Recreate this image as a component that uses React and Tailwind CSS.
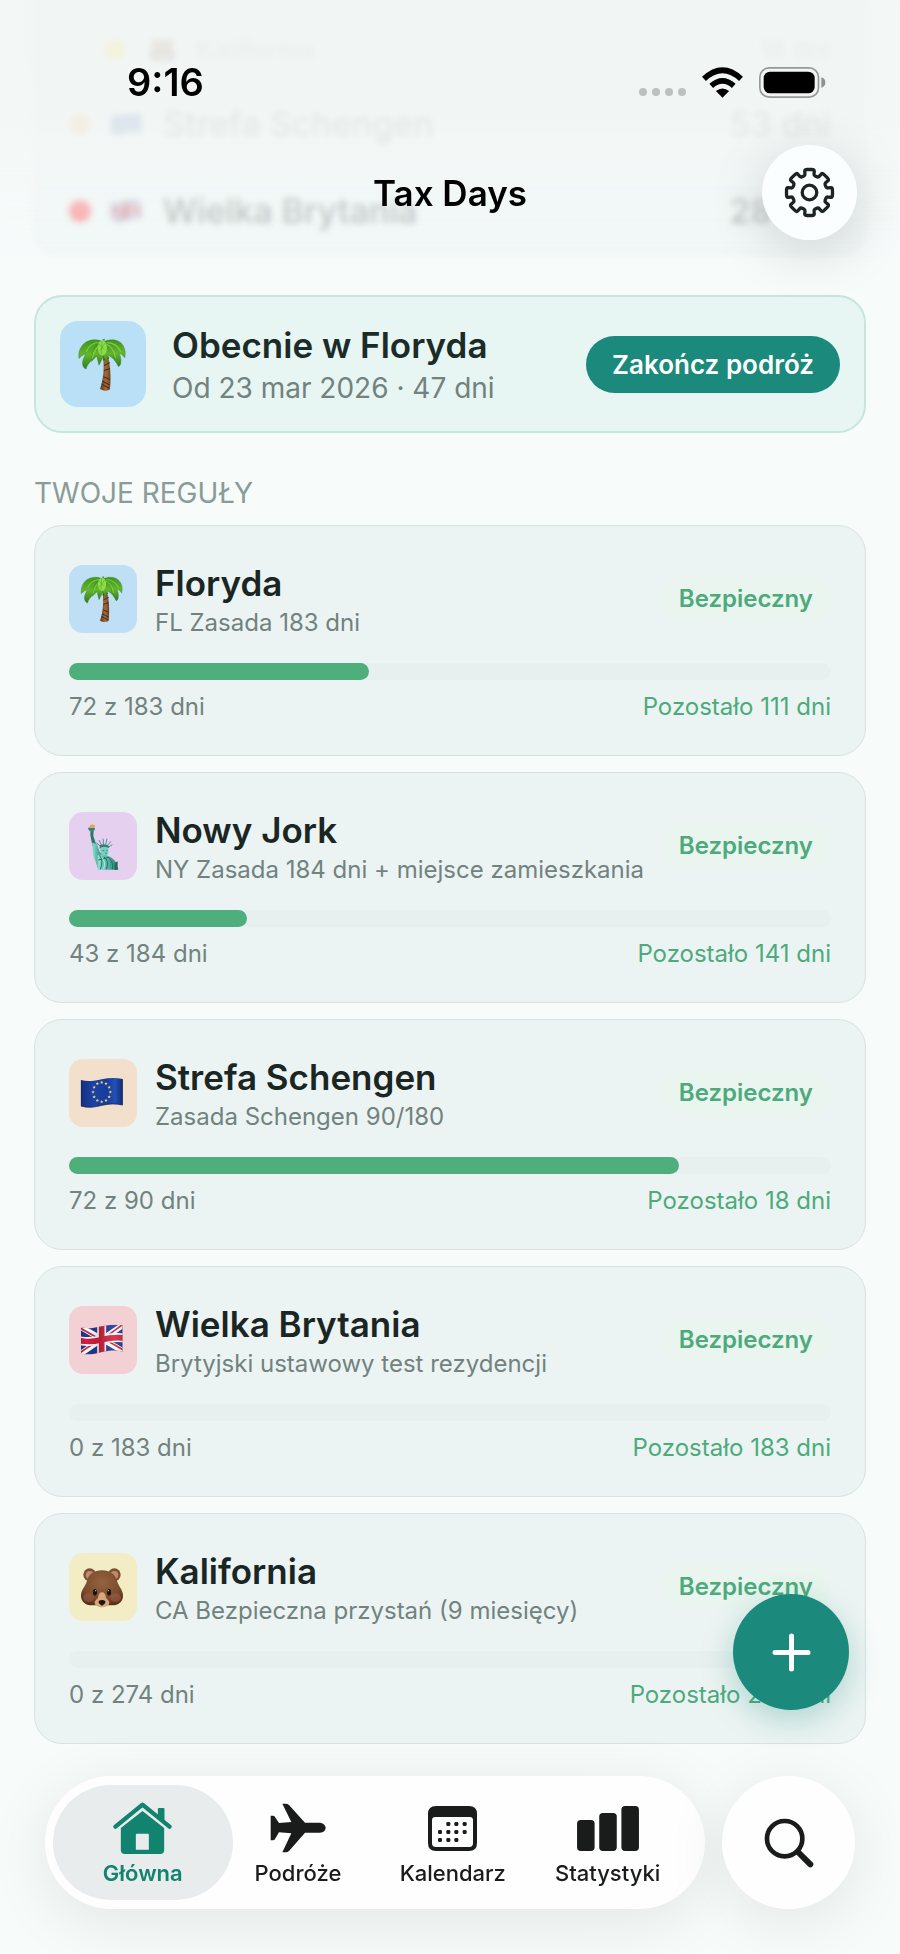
import React from "react";

/* ---------- Region artwork (shared 204 x 204 canvas) ---------- */

function Palm() {
  return (
    <svg viewBox="0 0 204 204" className="size-full" aria-hidden="true">
      <defs>
        <linearGradient id="trunk" x1="0" x2="1">
          <stop offset="0" stopColor="#5b331a" />
          <stop offset=".55" stopColor="#a06c3a" />
          <stop offset="1" stopColor="#6d4322" />
        </linearGradient>
        <linearGradient id="frond" x1="0" y1="0" x2="0" y2="1">
          <stop offset="0" stopColor="#3f9420" />
          <stop offset=".5" stopColor="#64b62c" />
          <stop offset="1" stopColor="#2f7d1c" />
        </linearGradient>
      </defs>
      <path d="M98 72C106 100 103 138 93 167Q105 175 119 168C123 138 120 100 112 72Z" fill="url(#trunk)" />
      <path d="M101 90L117 84M103 105L119 97M103 118L119 113M102 134L119 142M99 146L118 156M97 154L117 165" stroke="#3d210f" strokeWidth="2.5" fill="none" />
      <g fill="url(#frond)" stroke="#2f7d1c" strokeWidth="1">
        <path d="M102 42C84 32 58 36 47 50C38 61 35 72 37 86C44 79 48 76 54 74C52 82 44 92 47 104C49 110 52 113 56 114C58 102 66 98 70 90C74 82 84 76 92 70Z" />
        <path d="M102 42C120 32 145 36 154 52C160 62 161 73 158 84C153 76 148 74 144 72C147 80 150 92 147 102Q144 108 141 107C138 98 132 95 128 84C123 78 116 74 108 70Z" />
        <path d="M88 42L74 66L70 94L84 80L90 104L102 80L108 96L116 78L130 88L126 62L112 42Z" />
      </g>
      <path d="M98 44C80 42 64 50 56 68M98 48C84 54 76 68 72 86M110 44C128 44 140 52 148 68M110 48C124 54 130 66 134 84" stroke="#9adf52" strokeWidth="3" fill="none" opacity=".7" />
      <ellipse cx="99" cy="58" rx="12" ry="20" fill="#8ddc4c" />
      <path d="M98 40L96 74M90 48L104 62M106 46L92 66" stroke="#5bb02c" strokeWidth="2" />
      <path d="M98 36L106 34L104 40Z" fill="#3f9420" />
    </svg>
  );
}

function Liberty() {
  return (
    <svg viewBox="0 0 204 204" className="size-full" aria-hidden="true">
      <defs>
        <linearGradient id="copper" x1="0" x2="1">
          <stop offset="0" stopColor="#8fe0d2" />
          <stop offset=".5" stopColor="#55b5a6" />
          <stop offset="1" stopColor="#2d8176" />
        </linearGradient>
      </defs>
      <path d="M62 46C60 38 68 40 70 37C74 40 80 36 77 46Z" fill="#f0a52e" />
      <path d="M57 47H78L76 56H60Z" fill="#2c7f73" />
      <path d="M64 56H74L73 72L80 92L86 112L76 122L68 90L64 70Z" fill="#2d766d" />
      <path d="M70 92L84 96L92 120L100 128L88 174L80 150L72 128Z" fill="url(#copper)" />
      <path d="M82 92L96 104M90 84L98 100M102 80L104 98M114 80L110 98M126 88L114 102M130 98L118 106" stroke="#3b7c82" strokeWidth="2.5" />
      <path d="M92 100Q106 92 120 102L119 109Q106 102 92 110Z" fill="#347f77" />
      <path d="M94 108Q106 102 118 109V122Q116 132 108 133Q97 130 94 120Z" fill="#79cfc0" />
      <path d="M100 116H106M111 116H116M108 124H114" stroke="#276e65" strokeWidth="2" />
      <path d="M86 130Q102 124 118 132Q140 142 144 160V173H86Z" fill="url(#copper)" />
      <path d="M92 130Q104 146 94 172M104 134Q122 146 112 172M118 136Q134 150 130 172M88 144L120 136" stroke="#276e65" strokeWidth="3" fill="none" />
      <path d="M98 136Q112 150 104 172" stroke="#a4ece0" strokeWidth="3" fill="none" />
      <path d="M138 152L146 148V164L148 173H136Z" fill="#22685f" />
    </svg>
  );
}

const STARS = Array.from({ length: 12 }, (_, i) => {
  const a = (i * Math.PI) / 6;
  return [98 + 26 * Math.sin(a), 99 - 29 * Math.cos(a)];
});

function EuFlag() {
  return (
    <svg viewBox="0 0 204 204" className="size-full" aria-hidden="true">
      <defs>
        <linearGradient id="eu" x1="0" x2="1">
          <stop offset="0" stopColor="#14307f" />
          <stop offset=".3" stopColor="#1b43a6" />
          <stop offset=".62" stopColor="#173c9c" />
          <stop offset=".82" stopColor="#2450b4" />
          <stop offset="1" stopColor="#122a72" />
        </linearGradient>
      </defs>
      <path d="M36 63C56 69 76 66 98 61C120 56 142 56 161 60V138C142 133 120 134 98 139C76 145 56 147 36 141Z" fill="url(#eu)" />
      <path d="M36 141C56 147 76 145 98 139C120 134 142 133 161 138" stroke="#0e215c" strokeWidth="2.5" fill="none" />
      <path d="M37 64V141M160 61V137" stroke="#0e215c" strokeWidth="2" />
      {STARS.map(([x, y], i) => (
        <path key={i} transform={`translate(${x} ${y})`} d="M0-5L1.4-1.6L5-1.4L2.2.9L3.1 4.4L0 2.4L-3.1 4.4L-2.2.9L-5-1.4L-1.4-1.6Z" fill="#f5d57a" />
      ))}
    </svg>
  );
}

function UkFlag() {
  return (
    <svg viewBox="0 0 204 204" className="size-full" aria-hidden="true">
      <defs>
        <clipPath id="ukwave">
          <path d="M36 63C56 69 76 67 98 61C120 56 142 55 161 58V137C142 131 120 133 98 138C76 145 56 147 36 143Z" />
        </clipPath>
        <linearGradient id="sheen" x1="0" x2="1">
          <stop offset="0" stopColor="#000" stopOpacity=".22" />
          <stop offset=".15" stopColor="#000" stopOpacity="0" />
          <stop offset=".45" stopColor="#000" stopOpacity=".14" />
          <stop offset=".75" stopColor="#fff" stopOpacity=".1" />
          <stop offset="1" stopColor="#000" stopOpacity=".2" />
        </linearGradient>
      </defs>
      <g clipPath="url(#ukwave)">
        <path d="M30 50H170V150H30Z" fill="#1f3a93" />
        <path d="M30 60L167 138M30 146L167 54" stroke="#fff" strokeWidth="17" />
        <path d="M30 64L98 103M102 97L167 134M30 142L98 96M102 99L167 51" stroke="#cf2340" strokeWidth="5" />
        <path d="M98 50V150M30 104Q64 110 98 101T167 96" stroke="#fff" strokeWidth="27" fill="none" />
        <path d="M98 50V150M30 104Q64 110 98 101T167 96" stroke="#d3213f" strokeWidth="17" fill="none" />
        <path d="M30 50H170V150H30Z" fill="url(#sheen)" />
      </g>
    </svg>
  );
}

function Bear() {
  return (
    <svg viewBox="0 0 204 204" className="size-full" aria-hidden="true">
      <defs>
        <radialGradient id="fur" cx=".5" cy=".35" r=".65">
          <stop offset="0" stopColor="#94633f" />
          <stop offset=".7" stopColor="#7c4c2d" />
          <stop offset="1" stopColor="#5b331c" />
        </radialGradient>
      </defs>
      <circle cx="62" cy="65" r="19" fill="#7d4e2f" />
      <circle cx="136" cy="65" r="19" fill="#7d4e2f" />
      <circle cx="62" cy="66" r="12" fill="#bb8b70" />
      <circle cx="136" cy="66" r="12" fill="#bb8b70" />
      <path d="M99 52C123 52 140 64 145 86C149 100 162 110 162 128C162 146 148 157 130 157H68C50 157 36 146 36 128C36 110 49 100 53 86C58 64 75 52 99 52Z" fill="url(#fur)" />
      <ellipse cx="58" cy="134" rx="16" ry="13" fill="#a15f49" opacity=".55" />
      <ellipse cx="140" cy="134" rx="16" ry="13" fill="#a15f49" opacity=".55" />
      <path d="M99 118C106 118 110 124 111 135C116 140 121 144 121 150C119 159 110 162 99 163C88 162 79 159 77 150C77 144 82 140 87 135C88 124 92 118 99 118Z" fill="#d6a877" />
      <path d="M89 144Q99 138 109 144Q111 152 99 158Q87 152 89 144Z" fill="#1c1512" />
      <ellipse cx="78" cy="118" rx="6" ry="10" fill="#1a1210" />
      <ellipse cx="120" cy="118" rx="6" ry="10" fill="#1a1210" />
      <circle cx="80" cy="113" r="2" fill="#d9c9bd" />
      <circle cx="118" cy="113" r="2" fill="#d9c9bd" />
    </svg>
  );
}

/* ---------- Interface icons ---------- */

function gearPath() {
  const pts = [];
  for (let k = 0; k < 8; k++) {
    for (const [deg, r] of [[-12, 71], [12, 71], [14.5, 53], [30.5, 53]]) {
      const a = ((k * 45 + deg) * Math.PI) / 180;
      pts.push([80 + r * Math.sin(a), 80 - r * Math.cos(a)]);
    }
  }
  const mix = (p, q, t) => [p[0] + (q[0] - p[0]) * t, p[1] + (q[1] - p[1]) * t];
  const f = (p) => `${p[0].toFixed(1)} ${p[1].toFixed(1)}`;
  return (
    pts
      .map((p, i) => {
        const prev = pts[(i + pts.length - 1) % pts.length];
        const next = pts[(i + 1) % pts.length];
        return `${i ? "L" : "M"}${f(mix(p, prev, 0.26))}Q${f(p)} ${f(mix(p, next, 0.26))}`;
      })
      .join("") + "Z"
  );
}

const GEAR = gearPath();

function GearIcon() {
  return (
    <svg viewBox="0 0 160 160" className="size-[53px]" fill="none" stroke="#1c2423" strokeWidth="10" strokeLinejoin="round" aria-hidden="true">
      <path d={GEAR} />
      <circle cx="80" cy="80" r="22" />
    </svg>
  );
}

function HouseIcon() {
  return (
    <svg viewBox="0 0 176 156" className="h-[52px] w-[59px]" fill="currentColor" aria-hidden="true">
      <path d="M7 74L88 8L169 74" fill="none" stroke="currentColor" strokeWidth="13" strokeLinecap="round" strokeLinejoin="round" />
      <path d="M134 21Q134 18 137 18H151Q154 18 154 21V56L134 40Z" />
      <path fillRule="evenodd" d="M23 78L88 27L153 78V144Q153 156 141 156H35Q23 156 23 144ZM71 95Q68 95 68 98V143H107V98Q107 95 104 95Z" />
    </svg>
  );
}

function PlaneIcon() {
  return (
    <svg viewBox="0 0 168 150" className="h-[50px] w-[56px]" fill="currentColor" aria-hidden="true">
      <path d="M2 38H9Q13 38 15 42L27 60L64 57L37 2H47Q53 2 57 6L105 59H150C161 60 167 68 167 74C167 82 161 88 150 89H105L57 144Q53 148 48 148H37L64 91L27 88L15 108Q13 112 9 112H2Z" />
    </svg>
  );
}

const DOTS = [[61, 54], [85, 54], [110, 54], [36, 78], [61, 78], [85, 78], [110, 78], [36, 102], [61, 102], [85, 102]];

function CalendarIcon() {
  return (
    <svg viewBox="0 0 147 135" className="h-[45px] w-[49px]" fill="currentColor" aria-hidden="true">
      <path fillRule="evenodd" d="M24 0H123Q147 0 147 24V111Q147 135 123 135H24Q0 135 0 111V24Q0 0 24 0ZM22 33Q12 33 12 43V112Q12 123 23 123H124Q135 123 135 112V43Q135 33 125 33Z" />
      {DOTS.map(([x, y]) => (
        <rect key={`${x}-${y}`} x={x - 6} y={y - 6} width="12" height="12" rx="4" />
      ))}
    </svg>
  );
}

function BarsIcon() {
  return (
    <svg viewBox="0 0 187 136" className="h-[45px] w-[62px]" fill="currentColor" aria-hidden="true">
      <rect x="0" y="42" width="53" height="94" rx="11" />
      <rect x="67" y="21" width="53" height="115" rx="11" />
      <rect x="134" y="0" width="53" height="136" rx="11" />
    </svg>
  );
}

function SearchIcon() {
  return (
    <svg viewBox="0 0 150 150" className="size-[50px]" fill="none" stroke="#191c1b" strokeLinecap="round" aria-hidden="true">
      <circle cx="62" cy="62" r="53" strokeWidth="14" />
      <path d="M102 102L139 139" strokeWidth="18" />
    </svg>
  );
}

function WifiIcon() {
  return (
    <svg viewBox="0 0 124 92" className="h-[31px] w-[41px]" aria-hidden="true">
      <g fill="none" stroke="#000" strokeWidth="17">
        <path d="M6 35Q62 -17 118 35" />
        <path d="M28 56Q62 26 96 56" />
      </g>
      <path d="M42 72Q62 56 82 72L62 92Z" />
    </svg>
  );
}

function BatteryIcon() {
  return (
    <svg viewBox="0 0 201 93" className="h-[31px] w-[67px]" aria-hidden="true">
      <rect x="2.5" y="2.5" width="176" height="88" rx="28" fill="none" stroke="#959998" strokeWidth="5" />
      <rect x="14" y="14" width="153" height="65" rx="19" />
      <path d="M187 31Q199 34 199 46.500T187 62Z" fill="#8e9291" />
    </svg>
  );
}

/* ---------- Data ---------- */

const HISTORY = [
  { name: "Kalifornia", days: "16 dni", dot: "bg-[#f5d90a]", Art: Bear, sub: true },
  { name: "Strefa Schengen", days: "53 dni", dot: "bg-[#ff9d3c]", Art: EuFlag },
  { name: "Wielka Brytania", days: "28 dni", dot: "bg-[#ff3b40]", Art: UkFlag },
];

const RULES = [
  { name: "Floryda", rule: "FL Zasada 183 dni", used: 72, limit: 183, tile: "bg-[#bfdff6]", Art: Palm },
  { name: "Nowy Jork", rule: "NY Zasada 184 dni + miejsce zamieszkania", used: 43, limit: 184, tile: "bg-[#e6d0f0]", Art: Liberty },
  { name: "Strefa Schengen", rule: "Zasada Schengen 90/180", used: 72, limit: 90, tile: "bg-[#f3e0cc]", Art: EuFlag },
  { name: "Wielka Brytania", rule: "Brytyjski ustawowy test rezydencji", used: 0, limit: 183, tile: "bg-[#f2d0d3]", Art: UkFlag },
  { name: "Kalifornia", rule: "CA Bezpieczna przystań (9 miesięcy)", used: 0, limit: 274, tile: "bg-[#f3edc5]", Art: Bear },
];

const TABS = [
  { label: "Główna", Icon: HouseIcon, active: true },
  { label: "Podróże", Icon: PlaneIcon },
  { label: "Kalendarz", Icon: CalendarIcon },
  { label: "Statystyki", Icon: BarsIcon },
];

/* ---------- Sections ---------- */

function History() {
  return (
    <ul className="rounded-b-[24px] border border-t-0 border-[#dbe3e2] bg-[#eaf5f3] pt-[19px]">
      {HISTORY.map(({ name, days, dot, Art, sub }) => (
        <li
          key={name}
          className={`flex items-center pr-[34px] ${
            sub ? "h-[61px] pl-[69px] text-[26px] text-[#1a2826]/40" : "h-[87px] pl-[34px] text-[34px] text-[#1a2826]/70"
          }`}
        >
          <span className={`size-[22px] rounded-full ${dot}`} />
          <span className={sub ? "ml-4 size-[42px]" : "ml-3 size-[48px]"}>
            <Art />
          </span>
          <span className="ml-3 grow font-medium">{name}</span>
          <span className="font-medium">{days}</span>
        </li>
      ))}
    </ul>
  );
}

function CurrentTrip() {
  return (
    <section className="flex items-center rounded-[28px] border-2 border-[#c6e5dd] bg-[#e7f6f3] px-6 py-6">
      <div className="flex size-[86px] items-center justify-center rounded-[18px] bg-[#b9e0f6]">
        <div className="size-[77px]">
          <Palm />
        </div>
      </div>
      <div className="ml-[26px] grow">
        <h2 className="text-[35px] leading-[48px] font-semibold text-[#1a2b28]">Obecnie w Floryda</h2>
        <p className="text-[28px] leading-[38px] text-[#71827f]">Od 23 mar 2026 · 47 dni</p>
      </div>
      <button type="button" className="h-[57px] rounded-full bg-[#1b8a7c] px-[26px] text-[26px] font-semibold text-white">
        Zakończ podróż
      </button>
    </section>
  );
}

function RuleCard({ name, rule, used, limit, tile, Art }) {
  return (
    <li className="rounded-[28px] border border-[#d9e2e1] bg-[#ecf4f3] px-[34px] pt-[33px] pb-[30px]">
      <div className="flex items-center">
        <div className={`size-[68px] rounded-[14px] ${tile}`}>
          <Art />
        </div>
        <div className="ml-[18px] grow">
          <h3 className="text-[35px] leading-[48px] font-semibold text-[#1a2624]">{name}</h3>
          <p className="text-[24px] leading-[32px] text-[#71827f]">{rule}</p>
        </div>
        <span className="rounded-full bg-[#e9f5ee] px-[18px] text-[24px] leading-[44px] font-semibold text-[#4caa7c]">Bezpieczny</span>
      </div>
      <div
        role="progressbar"
        aria-label={name}
        aria-valuenow={used}
        aria-valuemin={0}
        aria-valuemax={limit}
        className="mt-6 h-[17px] rounded-full bg-[#e8f0ef]"
      >
        <div className="h-full rounded-full bg-[#4eae7c]" style={{ width: `${(used / limit) * 100}%` }} />
      </div>
      <div className="mt-2 flex justify-between text-[24px] leading-[37px]">
        <span className="text-[#71827f]">
          {used} z {limit} dni
        </span>
        <span className="text-[#4caa7c]">Pozostało {limit - used} dni</span>
      </div>
    </li>
  );
}

function Header() {
  return (
    <header className="fixed inset-x-0 top-0 z-10">
      <div className="absolute inset-x-0 top-0 h-[262px] bg-linear-to-b from-[#f2f6f5]/90 from-20% via-[#f3f7f6]/90 via-50% to-[#f7fbfa]/50 backdrop-blur-[3px]" />
      <div className="relative flex items-center justify-between pt-[57px] pr-[74px] pl-[127px]">
        <time className="text-[38px] leading-[50px] font-semibold text-black">9:16</time>
        <div className="flex items-center">
          <div className="mt-[20px] mr-4 flex gap-[5px]">
            {[0, 1, 2, 3].map((i) => (
              <span key={i} className="size-2 rounded-full bg-[#bcc0bf]" />
            ))}
          </div>
          <WifiIcon />
          <span className="w-4" />
          <BatteryIcon />
        </div>
      </div>
      <div className="relative mt-[38px] grid grid-cols-[1fr_auto_1fr] items-center px-[43px]">
        <h1 className="col-start-2 text-[35px] leading-[44px] font-semibold text-black">Tax Days</h1>
        <button
          type="button"
          aria-label="Ustawienia"
          className="flex size-[95px] items-center justify-center justify-self-end rounded-full bg-[#fafefe] shadow-[0_12px_56px_rgba(0,0,0,0.15)]"
        >
          <GearIcon />
        </button>
      </div>
    </header>
  );
}

function TabBar() {
  return (
    <div className="fixed inset-x-[45px] bottom-[45px] z-10 flex gap-[17px]">
      <nav className="flex h-[133px] grow rounded-full bg-[#fefefe] px-5 py-[9px] shadow-[0_12px_64px_rgba(0,0,0,0.09)]">
        {TABS.map(({ label, Icon, active }) => (
          <a
            key={label}
            href="#"
            aria-current={active ? "page" : undefined}
            className={`flex flex-1 flex-col items-center rounded-full pt-4 text-[22px] leading-[28px] ${
              active ? "-mx-3 grow-[1.16] bg-[#e9ecec] font-semibold text-[#12836f]" : "font-medium text-[#191c1b]"
            }`}
          >
            <span className="flex h-[54px] items-center">
              <Icon />
            </span>
            <span className="mt-1">{label}</span>
          </a>
        ))}
      </nav>
      <button
        type="button"
        aria-label="Szukaj"
        className="flex size-[133px] shrink-0 items-center justify-center rounded-full bg-[#fefefe] shadow-[0_12px_64px_rgba(0,0,0,0.09)]"
      >
        <SearchIcon />
      </button>
    </div>
  );
}

export default function App() {
  return (
    <div className="min-h-screen bg-[#f7fbfa] font-['Inter','Noto_Sans',sans-serif]">
      <Header />
      <main className="px-[34px] pb-[210px]">
        <History />
        <div className="mt-10">
          <CurrentTrip />
        </div>
        <h2 className="mt-10 text-[28px] leading-[40px] text-[#8a9c99]">TWOJE REGUŁY</h2>
        <ul className="mt-3 flex flex-col gap-4">
          {RULES.map((r) => (
            <RuleCard key={r.name} {...r} />
          ))}
        </ul>
      </main>
      <button
        type="button"
        aria-label="Dodaj podróż"
        className="fixed right-[51px] bottom-[244px] z-10 flex size-[116px] items-center justify-center rounded-full bg-[#1b8a7c] shadow-[0_10px_32px_rgba(27,138,124,0.3)]"
      >
        <svg viewBox="0 0 39 39" className="size-[39px]" stroke="#fff" strokeWidth="5" strokeLinecap="round" aria-hidden="true">
          <path d="M19.500 3V36M3 19.500H36" />
        </svg>
      </button>
      <TabBar />
    </div>
  );
}
